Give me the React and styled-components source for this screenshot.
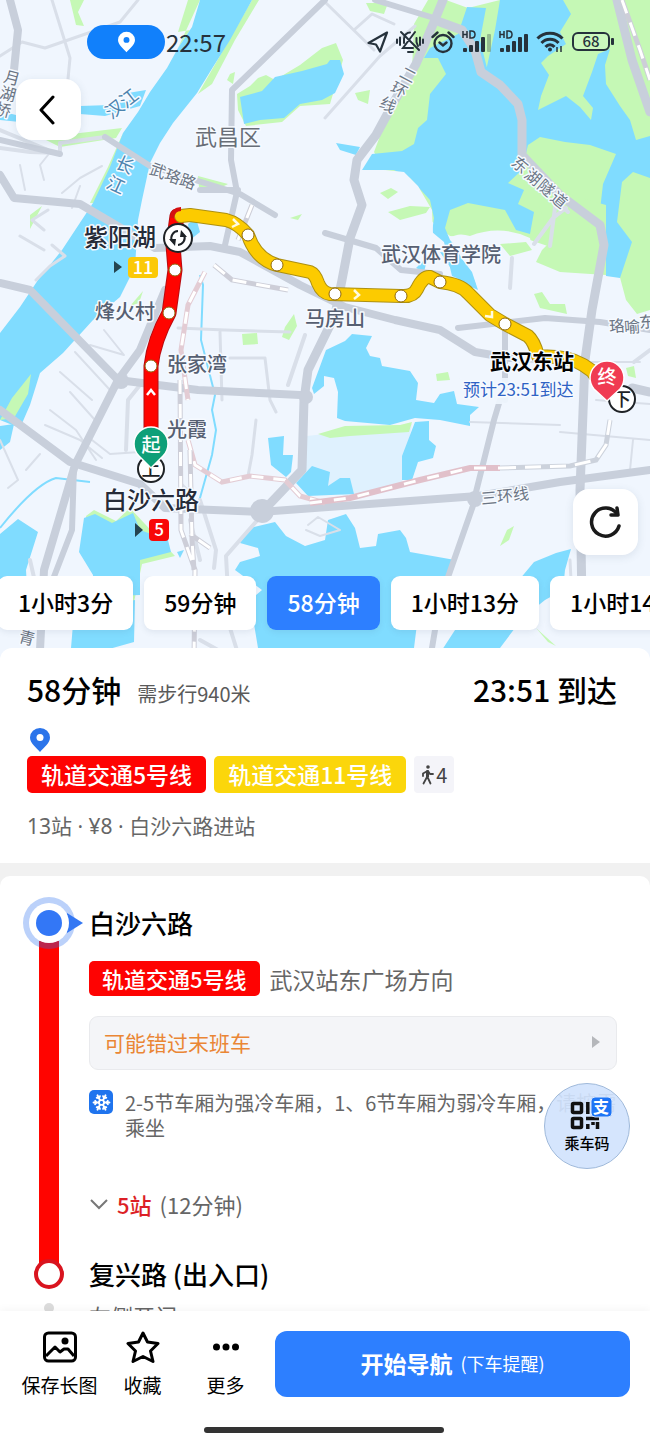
import React from "react";
import styled, { createGlobalStyle, css } from "styled-components";
import { Snowflake } from "lucide-react";

const GlobalStyle = createGlobalStyle`
  * { box-sizing: border-box; }
  body {
    margin: 0;
    background: #fff;
    font-family: "Noto Sans CJK SC", "Noto Sans", sans-serif;
    color: #000;
  }
  button { font: inherit; color: inherit; border: 0; background: none; padding: 0; cursor: pointer; }
  h1, h2, p { margin: 0; font-weight: 500; }
`;

const Screen = styled.div`
  position: relative;
  display: flex;
  flex-direction: column;
  height: 100vh;
  overflow: hidden;
`;

const Scroller = styled.main`
  flex: 1;
  min-height: 0;
  overflow-y: auto;
  scrollbar-width: none;
`;

/* ---------- map ---------- */

const MapArea = styled.section`
  display: grid;
  height: 660px;
  overflow: hidden;
  & > * { grid-area: 1 / 1; min-width: 0; min-height: 0; }
`;

const MapCanvas = styled.svg`
  display: block;
  width: 100%;
  height: 100%;
  background: #f0f6fe;
`;

const MapOverlay = styled.div`
  position: relative;
  display: flex;
  flex-direction: column;
`;

const StatusBar = styled.header`
  display: flex;
  align-items: center;
  gap: 1px;
  padding: 25px 35px 0 87px;
  height: 59px;
  color: #26323c;
`;

const LocationPill = styled.span`
  display: flex;
  align-items: center;
  justify-content: center;
  width: 78px;
  height: 34px;
  border-radius: 17px;
  background: #1180fb;
`;

const Clock = styled.time`
  font-size: 24px;
  line-height: 34px;
`;

const StatusIcons = styled.div`
  display: flex;
  align-items: center;
  gap: 7px;
  margin-left: auto;
`;

const FloatButton = styled.button`
  display: flex;
  align-items: center;
  justify-content: center;
  width: 65px;
  height: ${(p) => (p.$tall ? 66 : 61)}px;
  border-radius: 16px;
  background: #fff;
  box-shadow: 0 2px 8px rgba(60, 80, 110, 0.12);
`;

const BackRow = styled.div`
  padding: 20px 16px 0;
`;

const RefreshRow = styled.div`
  display: flex;
  justify-content: flex-end;
  margin-top: auto;
  padding: 0 12px 21px;
`;

const Chips = styled.div`
  display: flex;
  gap: 11px;
  height: 84px;
  margin-left: -2px;
  overflow: hidden;
`;

const Chip = styled.button`
  flex: none;
  height: 54px;
  padding: 0 20px 2px;
  border-radius: 9px;
  font-size: 23px;
  font-weight: 500;
  background: ${(p) => (p.$active ? "#2d7fff" : "#fff")};
  color: ${(p) => (p.$active ? "#fff" : "#000")};
  box-shadow: 0 2px 6px rgba(60, 80, 110, 0.1);
`;

/* ---------- summary ---------- */

const Summary = styled.section`
  position: relative;
  margin-top: -12px;
  padding: 20px 33px 22px 27px;
  border-radius: 12px 12px 0 0;
  background: #fff;
`;

const TitleRow = styled.div`
  display: flex;
  align-items: baseline;
  height: 44px;
  line-height: 42px;
`;

const Duration = styled.h1`
  font-size: 30px;
  font-weight: 500;
`;

const WalkNote = styled.span`
  margin-left: 16px;
  font-size: 20px;
  line-height: 24px;
  color: #5a5a5a;
`;

const Arrival = styled(Duration).attrs({ as: "p" })`
  margin-left: auto;
`;

const PinLine = styled.div`
  margin: 16px 0 4px 3px;
  height: 24px;
  svg { display: block; }
`;

const LineRow = styled.div`
  display: flex;
  align-items: center;
  gap: 8px;
`;

const LineBadge = styled.span`
  flex: none;
  height: ${(p) => (p.$small ? 35 : 37)}px;
  line-height: ${(p) => (p.$small ? 34 : 36)}px;
  padding: 0 ${(p) => (p.$small ? 13 : 14)}px;
  border-radius: 5px;
  font-size: ${(p) => (p.$small ? 22 : 23)}px;
  font-weight: 500;
  color: #fff;
  background: ${(p) => p.$color};
`;

const WalkBadge = styled.span`
  display: flex;
  align-items: center;
  justify-content: center;
  gap: 2px;
  width: 40px;
  height: 37px;
  border-radius: 4px;
  background: #f4f4f9;
  font-size: 20px;
  color: #444;
`;

const Meta = styled.p`
  margin-top: 18px;
  font-family: "Noto Sans", "Noto Sans CJK SC", sans-serif;
  font-size: 21px;
  font-weight: 400;
  line-height: 30px;
  color: #666;
`;

const Divider = styled.div`
  height: 25px;
  background: #f1f1f1;
`;

/* ---------- itinerary ---------- */

const Itinerary = styled.section`
  position: relative;
  margin-top: -12px;
  padding: 21px 33px 0 19px;
  border-radius: 10px 10px 0 0;
  background: #fff;
`;

const Leg = styled.div`
  display: grid;
  grid-template-columns: 60px 1fr;
  gap: 10px;
`;

const Rail = styled.div`
  display: flex;
  flex-direction: column;
  align-items: center;
`;

const StartNode = styled.svg`
  flex: none;
  z-index: 1;
  overflow: visible;
`;

const RailLine = styled.div`
  flex: 1;
  width: 20px;
  margin: -8px 0 -4px;
  background: #ff0400;
`;

const EndNode = styled.span`
  z-index: 1;
  width: 30px;
  height: 30px;
  border: 4px solid #d9141f;
  border-radius: 50%;
  background: #fff;
`;

const RailDot = styled.span`
  width: 10px;
  height: 10px;
  margin-top: 14px;
  border-radius: 50%;
  background: #dcdcdc;
`;

const LegBody = styled.div`
  min-width: 0;
  ${(p) => p.$first && css`padding: 11px 0 40px;`}
`;

const Station = styled.h2`
  font-size: 26px;
  line-height: 30px;
`;

const DirectionRow = styled.div`
  display: flex;
  align-items: center;
  gap: 10px;
  margin: 23px 0 20px;
`;

const Direction = styled.span`
  font-size: 23px;
  line-height: 34px;
  color: #666;
`;

const Warning = styled.button`
  display: flex;
  align-items: center;
  justify-content: space-between;
  width: 100%;
  height: 54px;
  padding: 0 16px 2px 14px;
  border: 1px solid #e9eaed;
  border-radius: 9px;
  background: #f4f5f8;
  font-size: 21px;
  color: #ea8635;
`;

const Note = styled.div`
  display: flex;
  gap: 12px;
  margin: 20px -8px 49px 0;
`;

const SnowBadge = styled.span`
  flex: none;
  display: flex;
  align-items: center;
  justify-content: center;
  width: 24px;
  height: 24px;
  border-radius: 5px;
  background: #1f74ee;
  color: #fff;
`;

const NoteText = styled.p`
  font-size: 20px;
  font-weight: 400;
  line-height: 25px;
  color: #666;
`;

const Expand = styled.button`
  display: flex;
  align-items: center;
  gap: 8px;
  font-size: 22px;
  line-height: 30px;
  color: #666;
  strong { font-weight: 500; color: #dc1f26; }
`;

const DoorSide = styled.p`
  margin-top: 13px;
  font-size: 22px;
  font-weight: 400;
  line-height: 26px;
  color: #666;
`;

/* ---------- floating code and bottom bar ---------- */

const CodeButton = styled.button`
  position: absolute;
  right: 20px;
  bottom: 275px;
  z-index: 2;
  display: flex;
  flex-direction: column;
  align-items: center;
  justify-content: center;
  width: 86px;
  height: 86px;
  border: 1px solid #9fb9da;
  border-radius: 50%;
  background: rgba(209, 227, 253, 0.92);
  font-size: 15px;
  font-weight: 500;
  line-height: 24px;
`;

const BottomBar = styled.footer`
  z-index: 1;
  padding: 20px 20px 11px 18px;
  background: #fff;
  box-shadow: 0 -2px 8px rgba(0, 0, 0, 0.04);
`;

const Actions = styled.div`
  display: flex;
  height: 66px;
`;

const Tool = styled.button`
  display: flex;
  flex-direction: column;
  align-items: center;
  justify-content: space-between;
  width: 83px;
  padding-bottom: 1px;
  font-size: 19px;
  line-height: 22px;
`;

const Navigate = styled.button`
  flex: 1;
  display: flex;
  align-items: center;
  justify-content: center;
  gap: 8px;
  margin-left: 8px;
  padding-bottom: 2px;
  border-radius: 12px;
  background: #2d7fff;
  color: #fff;
  font-size: 23px;
  font-weight: 700;
  small { font-size: 18px; font-weight: 400; }
`;

const HomeIndicator = styled.div`
  width: 240px;
  height: 6px;
  margin: 30px auto 0;
  border-radius: 3px;
  background: #333;
`;

/* ---------- map drawing ---------- */

const Water = styled.path`fill: #80dcff;`;
const Green = styled.path`fill: #c5f8b5;`;
const Land = styled.path`fill: #f0f6fe;`;
const Road = styled.path`
  fill: none;
  stroke: ${(p) => (p.$minor ? "#d9dfe9" : "#c8cfdb")};
  stroke-width: ${(p) => p.$w};
  stroke-linejoin: round;
  stroke-linecap: round;
`;
const Rails = styled.path`
  fill: none;
  stroke: ${(p) => p.$color};
  stroke-width: ${(p) => p.$w};
  stroke-dasharray: ${(p) => p.$dash || "none"};
`;
const Route = styled.path`
  fill: none;
  stroke: ${(p) => p.$color};
  stroke-width: ${(p) => p.$w};
  stroke-linejoin: round;
  stroke-linecap: round;
`;
const MapText = styled.text`
  font-size: ${(p) => p.$size || 20}px;
  font-weight: ${(p) => p.$weight || 500};
  fill: ${(p) => p.$color || "#566072"};
  stroke: ${(p) => (p.$plain ? "none" : "#f6faff")};
  stroke-width: 3px;
  stroke-linejoin: round;
  paint-order: stroke;
  text-anchor: ${(p) => p.$anchor || "start"};
`;

/* Street names set one character at a time along the street. */
function StreetName({ chars, angle, size = 16, color = "#6b7584" }) {
  return chars.map(([c, x, y]) => (
    <MapText key={c} $size={size} $weight={400} $color={color} $anchor="middle"
      transform={`translate(${x} ${y}) rotate(${angle})`} y={size * 0.36}>{c}</MapText>
  ));
}

const STOPS = [
  [248, 235], [277, 265], [335, 294], [401, 296], [440, 282], [505, 324],
  [175, 270], [169, 313], [151, 366],
];

const YELLOW = "M181 216 L190 215 L226 220 Q238 223 248 235 Q256 259 277 265 L310 272 Q315 274 318 283 Q322 293 330 294 L401 296 Q413 297 417 289 Q423 276 430 277 L440 282 Q460 284 468 293 L490 315 L505 324 L528 336 Q534 341 538 356 L556 357 Q576 358 592 371 L607 392";
const RED = "M151 450 L151 366 Q154 340 169 313 L175 270 L173 245 L177 216";

function MetroMap() {
  return (
    <MapCanvas viewBox="0 0 650 660" preserveAspectRatio="xMidYMin slice" role="img" aria-label="路线地图">
      {/* river with its green banks */}
      <Green d="M188 0 L200 0 L178 48 L190 30 L178 32Z M252 0 L259 0 L235 40 L212 84 L198 94Z M123 133 L108 167 L90 203 L97 203 L114 167Z" />
      <Water d="M200 0 L192 27 L178 48 L167 68 L150 92 L138 112 L123 133 L110 167 L93 203 L62 250 L38 280 L20 307 L0 333 L0 420 L20 428 L30 405 L40 373 L63 353 L93 320 L120 297 L135 267 L138 220 L142 200 L150 163 L160 143 L173 123 L197 93 L213 67 L230 40 L252 0Z" />
      <Water d="M146 90 L128 93 L134 99 L110 105 L80 106 L80 114 L105 116 L140 106Z M0 111 L20 116 L20 122 L0 120Z" />
      <Green d="M0 420 L12 398 L31 374 L28 394 L14 418Z M70 0 L84 0 L78 12 L84 26 L76 25Z M40 137 L80 133 L122 128 L116 138 L60 147Z M230 74 L235 72 L233 84 L227 80Z M198 176 L228 184 L214 191 L199 187Z M30 215 L42 206 L30 229Z" />
      {/* west lakes */}
      <Green d="M237 94 L250 86 L258 78 L266 75 L275 80 L300 65 L322 48 L336 43 L343 60 L330 104 L300 106 L282 122 L246 126 L238 110Z" />
      <Water d="M240 97 L262 91 L275 77 L302 71 L327 64 L330 60 L340 60 L344 74 L335 93 L322 100 L300 104 L284 118 L260 120 L244 124Z" />
      <Green d="M366 3 L388 3 L384 14 L370 11Z M355 93 L370 90 L368 104 L358 100Z M290 218 L302 214 L298 220Z M242 334 L257 333 L258 344 L243 345Z M285 327 L294 314 L297 326 L289 340 L282 337Z M130 306 L143 291 L139 303Z" />
      {/* East Lake */}
      <Green d="M428 0 L446 0 L468 8 L500 0 L565 0 L650 0 L650 310 L637 314 L626 300 L618 270 L530 240 L500 240 L450 236 L430 220 L385 172 L374 152 L386 120 L412 70 L414 24Z" />
      <Water d="M500 0 L563 0 L571 14 L560 32 L566 44 L548 56 L541 63 L549 75 L541 96 L538 110 L566 96 L580 107 L591 120 L593 108 L583 96 L592 72 L598 54 L610 49 L605 65 L606 84 L620 106 L630 120 L636 140 L650 136 L650 178 L633 172 L622 182 L617 222 L632 242 L620 278 L606 276 L600 210 L603 184 L616 154 L590 145 L565 142 L540 137 L528 145 L522 170 L508 183 L524 190 L518 204 L534 212 L530 234 L516 230 L505 210 L468 203 L450 210 L445 228 L450 240 L470 262 L476 286 L452 276 L444 242 L432 232 L434 218 L430 200 L410 178 L394 170 L362 170 L372 154 L402 151 L414 144 L418 128 L427 120 L430 94 L446 74 L438 58 L424 58 L430 48 L458 34 L467 7 L486 8 L480 40 L488 72 L484 80 L495 30Z" />
      <Land d="M356 174 L385 170 L404 172 L418 186 L432 210 L433 234 L418 266 L408 272 L390 272 L350 220Z M450 238 Q458 232 470 236 Q500 224 530 238 L535 262 L565 277 L606 276 L616 300 L630 318 L560 320 L480 290Z" />
      <Green d="M380 193 L391 188 L398 192 L388 199Z M388 212 L410 206 L430 207 L426 213 L400 220Z M538 204 L570 195 L606 205 L606 275 L560 272 L536 262 L542 250 L552 240Z M500 244 L526 242 L532 250 L510 256Z M534 294 L542 292 L550 304 L565 304 L567 314 L540 308Z" />
      <Water d="M336 143 L360 147 L356 155 L340 150Z M416 268 L428 256 L424 272Z M188 224 L196 218 L200 232 L190 240Z M440 252 L458 254 L472 272 L478 290 L460 282Z" />
      {/* southern lakes */}
      <path fill="#dff1fe" d="M307 436 L412 424 L402 482 L350 498 L302 480Z" />
      <Water d="M345 341 L352 334 L372 336 L366 348 L370 356 L380 358 L382 366 L410 371 L418 383 L416 400 L434 403 L440 394 L454 391 L457 404 L479 407 L470 415 L470 426 L440 420 L415 418 L390 425 L345 421 L337 418 L338 392 L334 378 L324 376 L324 386 L314 394 L312 388 L326 350Z" />
      <Green d="M318 434 L345 426 L400 425 L412 422 L409 432 L350 436 L330 438Z" />
      <Water d="M415 422 L429 421 L429 440 L436 446 L433 458 L418 462 L412 480 L402 480 L402 456Z M268 438 L284 436 L283 455 L293 455 L291 472 L286 477 L271 465Z M296 483 L312 466 L330 472 L328 486 L340 478 L350 478 L354 494 L308 496Z" />
      <Water d="M240 543 L250 528 L275 522 L286 536 L305 546 L325 540 L328 520 L346 514 L355 528 L360 548 L376 546 L378 534 L400 530 L406 538 L410 552 L455 560 L448 576 L420 600 L414 648 L260 660 L250 600 L262 590 L235 570 L240 562 L260 556 L258 548Z M455 630 L515 628 L500 648 L442 650Z" />
      <Green d="M86 516 L94 510 L116 521 L130 508 L175 556 L142 564 L134 602 L90 560Z" />
      <Water d="M84 518 L95 514 L112 523 L133 513 L140 530 L168 540 L171 552 L140 560 L140 595 L112 596 L92 600 L93 575 L79 552Z M0 534 L18 519 L38 532 L26 570 L28 605 L0 610Z M74 612 L135 600 L134 642 L70 660Z M0 426 L14 424 L10 442 L0 450Z M177 552 L184 550 L180 558Z" />
      <Water d="M519 580 L534 562 L556 553 L571 549 L565 570 L563 590 L545 600 L520 620Z" />
      <Green d="M436 374 L448 372 L450 380 L437 381Z M507 530 L514 526 L509 540 L500 546Z M626 368 L634 366 L636 378 L628 376Z M536 628 L556 646 L548 642Z" />
      <path d="M0 528 Q35 484 56 478 L90 482 M200 275 L203 285 L201 340 L215 395 L212 410 L216 430 L212 455 L205 480 L198 505" fill="none" stroke="#80dcff" strokeWidth="2" />

      {/* minor streets */}
      <Road $minor $w={2} d="M75 352 L110 390 M90 345 L124 355 L104 330 M60 372 L92 400 M70 392 L95 420 M50 410 L76 430 L96 460 M45 425 L80 440 L102 458 M0 440 L18 480 L8 488 M26 470 L40 454 M92 440 L110 454 L140 452 M180 482 L188 490 M48 155 L40 165 L44 180 M20 165 L25 190 M62 193 L80 178 L102 166 M72 208 L80 186 M308 525 L318 517 L340 530 L320 536 L306 530 M560 432 L650 440 M633 440 L630 470 M470 422 L560 425 M520 362 L640 362 M596 400 L650 404" />
      <Road $minor $w={3} d="M52 0 L70 58 L68 79 M0 56 L22 42 L45 48 L120 22 L138 0 M325 118 L380 56 L415 26 M325 2 L374 50 M354 30 L372 14 L394 24 M52 245 L65 256 L50 266 L36 280 M20 236 L44 250 M44 230 L32 220 L48 210 M178 328 L225 330 L290 332 M220 332 L222 400 M230 358 L265 358 L270 400 L276 412 M256 420 L252 455 L248 476 M570 560 L571 580 M506 330 L506 354" />
      <Road $minor $w={4} d="M0 130 L48 150 M0 148 L30 152 L60 153 M60 153 L60 143 L105 137 M550 246 L556 200 L568 212 M510 288 L512 258 M534 244 L553 218 L566 208 M634 362 L650 350 M140 385 L128 400 L126 450 M305 335 L288 385 M236 660 L200 640 M200 500 L216 550 L214 568 M190 520 L200 560 M38 595 L30 560 M240 660 L230 628 L226 556 L240 540 L262 515" />
      {/* main roads */}
      <Road $w={6} d="M325 0 L232 90 L231 160 L237 192 L225 245 M0 140 L60 154 M105 137 L150 166 L240 194 L275 215 M200 190 L238 190 M434 18 L375 0 M325 233 L376 248 L401 270 L440 274 M458 328 L545 318 L600 322 L650 330 M505 400 L505 328 M475 496 L494 420 L500 400 M475 500 L440 600 L430 660 M45 600 L72 530 L74 466" />
      <Road $w={8} d="M10 0 L18 30 L14 70 M0 175 L14 198 L80 204 L155 248 L210 246 L240 252 L300 285 L345 307 L395 320 L440 330 L475 352 L510 358 M0 283 L30 290 L118 380 L198 390 L300 395 M118 380 L75 465 L44 570 L40 650 M118 380 L140 350 L165 290 M0 410 L70 462 L140 484 L165 508 L260 512 L478 496 L560 482 L650 470" />
      <Road $w={9} d="M443 0 L434 22 L416 64 L395 100 L376 135 L357 160 L354 180 L362 205 L350 238 L342 280 L335 315 L308 370 L304 400 L302 470 L262 512 M440 22 L462 30 L475 50 L481 72 L500 85 L518 104 L522 120 L522 155 L560 195 L600 225 L604 245 L592 310 L585 360 L580 490 L582 600 M617 0 L632 60 L650 112 M632 388 L650 392" />
      <circle cx="262" cy="511" r="12" fill="#c8cfdb" />
      <circle cx="306" cy="397" r="7" fill="#c8cfdb" />
      <circle cx="121" cy="381" r="8" fill="#c8cfdb" />
      <circle cx="475" cy="499" r="8" fill="#c8cfdb" />

      {/* railways */}
      <Rails $color="#e3ccd4" $w={5} d="M205 272 L188 305 L181 350 L188 400 M188 440 L195 465 L222 482 L250 476 L285 480 L300 496 L325 503" />
      <Rails $color="#fff" $w={3} $dash="12 10" d="M205 272 L188 305 L181 350 L188 400 M188 440 L195 465 L222 482 L250 476 L285 480 L300 496 L325 503" />
      <Rails $color="#cdced8" $w={5} d="M180 380 L181 530 L195 570 L194 660 M190 450 L192 540 L194 570 M210 548 L190 534 M214 265 L232 280 L288 290 M622 0 L640 50 L650 80 M252 205 L238 240" />
      <Rails $color="#fff" $w={3} $dash="14 10" d="M180 380 L181 530 L195 570 L194 660 M190 450 L192 540 L194 570 M210 548 L190 534 M214 265 L232 280 L288 290 M622 0 L640 50 L650 80 M252 205 L238 240" />
      <Rails $color="#e1c0ca" $w={6} d="M310 503 L350 498 L420 480 L470 468 L500 468" />
      <Rails $color="#fff" $w={3} $dash="12 12" d="M310 503 L350 498 L420 480 L470 468 L500 468" />
      <Rails $color="#ccd2dc" $w={5} d="M500 468 L570 466 L596 460 L606 445 L610 420" />
      <Rails $color="#fff" $w={3} $dash="16 9" d="M500 468 L570 466 L596 460 L606 445 L610 420" />

      {/* area and street names */}
      <MapText x="228" y="145" $size={22} $weight={400} $color="#686e77" $anchor="middle">武昌区</MapText>
      <MapText $size={18} $weight={400} $color="#4c83ae" $anchor="middle" transform="translate(122 104) rotate(-38)" y="6">汉江</MapText>
      <StreetName chars={[["长", 125, 165], ["江", 116, 185]]} angle={25} size={18} color="#4c83ae" />
      <MapText $size={16} $weight={400} $color="#6b7584" $anchor="middle" transform="translate(173 176) rotate(20)" y="6">武珞路</MapText>
      <StreetName chars={[["月", 12, 78], ["湖", 8, 94], ["桥", 3, 110]]} angle={15} />
      <StreetName chars={[["二", 408, 75], ["环", 399, 90], ["线", 388, 105]]} angle={28} />
      <StreetName chars={[["东", 520, 165], ["湖", 533, 177], ["隧", 546, 188], ["道", 559, 200]]} angle={40} />
      <StreetName chars={[["珞", 617, 326], ["喻", 632, 327], ["东", 647, 322]]} angle={-4} />
      <StreetName chars={[["三", 489, 498], ["环", 505, 496], ["线", 521, 494]]} angle={-5} />
      <StreetName chars={[["青", 27, 638]]} angle={15} />

      {/* route */}
      <Route d={RED} $color="#b80c10" $w={15} />
      <Route d={RED} $color="#ff0400" $w={13} />
      <Route d={YELLOW} $color="#ad9010" $w={14} />
      <Route d={YELLOW} $color="#fccb00" $w={12} />
      <path d="M172 218 Q173 209 181 209" fill="none" stroke="#d50f10" strokeWidth="4" />
      {STOPS.map(([x, y]) => (
        <circle key={`${x}-${y}`} cx={x} cy={y} r="6" fill="#fff" stroke="#8f6a10" strokeWidth="1" />
      ))}
      <path d="M147 395 L151 390 L155 395" fill="none" stroke="#fff" strokeWidth="2.5" />
      <g fill="none" stroke="#fffbe0" strokeWidth="2.5">
        <path d="M233 219 L238 224 L232 227" />
        <path d="M354 290 L359 295 L354 299" />
        <path d="M492 311 L492 317 L485 316" />
      </g>

      {/* stop names */}
      <MapText x="95" y="319">烽火村</MapText>
      <MapText x="167" y="372">张家湾</MapText>
      <MapText x="167" y="437">光霞</MapText>
      <MapText x="305" y="326">马房山</MapText>
      <MapText x="381" y="262">武汉体育学院</MapText>
      <MapText x="84" y="246" $size={24} $color="#252b38">紫阳湖</MapText>
      <MapText x="103" y="509" $size={24} $color="#252b38">白沙六路</MapText>
      <rect x="458" y="378" width="116" height="26" rx="4" fill="#f0f6fe" opacity="0.9" />
      <MapText x="490" y="369" $size={21} $weight={700} $color="#000">武汉东站</MapText>
      <MapText x="463" y="396" $size={17} $weight={400} $color="#2f62c4">预计23:51到达</MapText>

      <path d="M114 261 L122 267 L114 273Z M135 523 L143 530 L135 537Z" fill="#244450" />
      <rect x="128" y="257" width="30" height="21" rx="4" fill="#fbc908" />
      <MapText x="143" y="274" $size={18} $color="#fff" $plain $anchor="middle">11</MapText>
      <rect x="149" y="519" width="20" height="22" rx="4" fill="#f80808" />
      <MapText x="159" y="536" $size={17} $color="#fff" $plain $anchor="middle">5</MapText>

      {/* transfer, boarding and alighting markers */}
      <circle cx="178" cy="238" r="14" fill="#fff" stroke="#1e2226" strokeWidth="2" />
      <g fill="none" stroke="#1e2226" strokeWidth="2">
        <path d="M178 231 A7 7 0 0 0 172 241" />
        <path d="M178 245 A7 7 0 0 0 184 235" />
      </g>
      <path d="M169 239 L176 239 L175 246Z M187 237 L180 237 L181 230Z" fill="#1e2226" />
      <circle cx="151" cy="469" r="13" fill="#fff" stroke="#1e2226" strokeWidth="2" />
      <MapText x="151" y="476" $size={19} $color="#1e2226" $plain $anchor="middle">上</MapText>
      <circle cx="622" cy="399" r="13" fill="#fff" stroke="#1e2226" strokeWidth="2" />
      <MapText x="622" y="406" $size={18} $color="#1e2226" $plain $anchor="middle">下</MapText>
      <path d="M151 468 L139 456 A17 17 0 1 1 163 456Z" fill="#0e9f78" stroke="#fff" strokeWidth="1.5" />
      <MapText x="151" y="452" $size={19} $color="#fff" $plain $anchor="middle">起</MapText>
      <path d="M607 401 L594 389 A17 17 0 1 1 620 389Z" fill="#f03b52" stroke="#fff" strokeWidth="1.5" />
      <MapText x="607" y="384" $size={19} $color="#fff" $plain $anchor="middle">终</MapText>
    </MapCanvas>
  );
}

/* ---------- icons ---------- */

function PinIcon({ width, height, color, hole }) {
  return (
    <svg width={width} height={height} viewBox="0 0 20 24" aria-hidden="true">
      <path d="M10 24 C7 20 0 15.500 0 9.500 A10 9.500 0 0 1 20 9.500 C20 15.500 13 20 10 24Z" fill={color} />
      <circle cx="10" cy="9.500" r="3.500" fill={hole} />
    </svg>
  );
}

function SignalIcon({ weak }) {
  return (
    <svg width="30" height="24" viewBox="0 0 30 24" fill="currentColor" aria-hidden="true">
      <path d="M1 1V8 M5 1V8 M1 4.500H5 M8 1V8H9.500Q13 8 13 4.500T9.500 1Z" fill="none" stroke="currentColor" strokeWidth="1.500" />
      <rect x="1" y="18" width="4" height="4" rx="1" />
      <rect x="7" y="15" width="4" height="7" rx="1" />
      <rect x="13" y="11" width="4" height="11" rx="1" />
      <rect x="19" y="7" width="4" height="15" rx="1" />
      <rect x="25" y="4" width="4" height="18" rx="1" opacity={weak ? 0.3 : 1} />
    </svg>
  );
}

function StatusGlyphs() {
  return (
    <StatusIcons>
      <svg width="22" height="22" viewBox="0 0 22 22" fill="none" stroke="currentColor" strokeWidth="2.200" strokeLinejoin="round" aria-hidden="true">
        <path d="M20 1.500 L1.500 12 L9 13.500 L13 20.500Z" />
      </svg>
      <svg width="28" height="24" viewBox="0 0 28 24" fill="none" stroke="currentColor" strokeWidth="2" strokeLinecap="round" aria-hidden="true">
        <path d="M5 2 L23 20 M19 2 L7 18 H17 M8 13 V9 C8 5 11 2.500 14 2.500 M20.500 8 V12 L22 16 M12 22 H17 M1 9.500 V13 M4 7.500 V15 M24 7.500 V15 M27 9.500 V13" />
      </svg>
      <svg width="24" height="23" viewBox="0 0 24 23" fill="none" stroke="currentColor" strokeWidth="2.400" strokeLinecap="round" aria-hidden="true">
        <circle cx="12" cy="12.500" r="8.500" />
        <path d="M8.500 11.500 L12 14.500 L15.500 11.500 M1.500 6 L6.500 1.500 M22.500 6 L17.500 1.500" />
      </svg>
      <SignalIcon weak />
      <SignalIcon />
      <svg width="29" height="22" viewBox="0 0 29 22" fill="none" stroke="currentColor" strokeWidth="3" aria-hidden="true">
        <path d="M1.500 7.500 C8 0.500 20 0.500 26.500 7.500 M5.500 12 C10 7 18 7 22.500 12 M9.500 16 C12 13 16 13 18.500 16" />
        <circle cx="14" cy="18.500" r="2" fill="currentColor" stroke="none" />
        <path d="M21 16 V21 M25 15 V21" strokeWidth="1.500" />
      </svg>
      <svg width="43" height="20" viewBox="0 0 43 20" aria-hidden="true">
        <rect x="1" y="1" width="36" height="17" rx="5" fill="#ffffff22" stroke="currentColor" strokeWidth="2" />
        <rect x="39" y="6" width="3" height="7" rx="1" fill="currentColor" />
        <text x="19" y="15" fontSize="15" fontWeight="500" textAnchor="middle" fill="currentColor">68</text>
      </svg>
    </StatusIcons>
  );
}

function WalkIcon() {
  return (
    <svg width="13" height="20" viewBox="0 0 13 20" fill="none" stroke="#444" strokeWidth="1.800" strokeLinecap="round" strokeLinejoin="round" aria-hidden="true">
      <circle cx="7" cy="2" r="1.800" fill="#444" stroke="none" />
      <path d="M6.500 6 V12 L9.500 18.500 M6 12 L2.500 18.500 M6.500 6 L2 8.500 V11 M7 6 L9 9 H12" />
      <path d="M5 5.500 H8 V12 H5Z" fill="#444" stroke="none" />
    </svg>
  );
}

function CodeIcon() {
  return (
    <svg width="50" height="34" viewBox="-4 0 50 34" aria-hidden="true">
      <g fill="none" stroke="#111" strokeWidth="3.500">
        <rect x="6.500" y="6.500" width="9" height="9" rx="1" />
        <rect x="6.500" y="21.500" width="9" height="9" rx="1" />
        <path d="M21.800 5 V17 M20 21.500 H33 M21.800 27 V32 M27 25 V28 M31.500 25 V32" />
      </g>
      <rect x="25" y="0" width="21" height="20" rx="4" fill="#1d74f5" stroke="#d6e6fd" strokeWidth="1" />
      <text x="35" y="16" fontSize="16" fontWeight="700" fill="#fff" textAnchor="middle">支</text>
    </svg>
  );
}

const DURATIONS = ["1小时3分", "59分钟", "58分钟", "1小时13分", "1小时14分"];

export default function App() {
  return (
    <>
      <GlobalStyle />
      <Screen>
        <Scroller>
          <MapArea>
            <MetroMap />
            <MapOverlay>
              <StatusBar>
                <LocationPill><PinIcon width={17} height={22} color="#fff" hole="#1180fb" /></LocationPill>
                <Clock>22:57</Clock>
                <StatusGlyphs />
              </StatusBar>
              <BackRow>
                <FloatButton aria-label="返回">
                  <svg width="20" height="30" viewBox="0 0 20 30" fill="none" stroke="#000" strokeWidth="3" strokeLinecap="round" strokeLinejoin="round">
                    <path d="M14 2 L2 15 L14 28" />
                  </svg>
                </FloatButton>
              </BackRow>
              <RefreshRow>
                <FloatButton $tall aria-label="刷新">
                  <svg width="34" height="34" viewBox="0 0 34 34" fill="none" stroke="#1a1a1a" strokeWidth="3.500" strokeLinecap="round" strokeLinejoin="round">
                    <path d="M30 21 A14 14 0 1 1 28 9" />
                    <path d="M28 3 L29 10 L22 10" />
                  </svg>
                </FloatButton>
              </RefreshRow>
              <Chips>
                {DURATIONS.map((d) => (
                  <Chip key={d} $active={d === "58分钟"} aria-pressed={d === "58分钟"}>{d}</Chip>
                ))}
              </Chips>
            </MapOverlay>
          </MapArea>

          <Summary>
            <TitleRow>
              <Duration>58分钟</Duration>
              <WalkNote>需步行940米</WalkNote>
              <Arrival>23:51 到达</Arrival>
            </TitleRow>
            <PinLine><PinIcon width={20} height={24} color="#2b74ea" hole="#fff" /></PinLine>
            <LineRow>
              <LineBadge $color="#fe0302">轨道交通5号线</LineBadge>
              <LineBadge $color="#fbd60b">轨道交通11号线</LineBadge>
              <WalkBadge><WalkIcon />4</WalkBadge>
            </LineRow>
            <Meta>13站 · ¥8 · 白沙六路进站</Meta>
          </Summary>
          <Divider />

          <Itinerary>
            <Leg>
              <Rail>
                <StartNode width="52" height="52" viewBox="0 0 52 52" aria-hidden="true">
                  <circle cx="26" cy="26" r="26" fill="#2d6ff0" opacity="0.32" />
                  <path d="M44 16 L60 26 L44 36Z" fill="#3377f3" />
                  <circle cx="26" cy="26" r="20" fill="#fff" />
                  <circle cx="26" cy="26" r="13" fill="#3377f6" />
                </StartNode>
                <RailLine />
              </Rail>
              <LegBody $first>
                <Station>白沙六路</Station>
                <DirectionRow>
                  <LineBadge $small $color="#fe0302">轨道交通5号线</LineBadge>
                  <Direction>武汉站东广场方向</Direction>
                </DirectionRow>
                <Warning>
                  可能错过末班车
                  <svg width="8" height="14" viewBox="0 0 8 14" aria-hidden="true"><path d="M0 1 L8 7 L0 13Z" fill="#b5b7bb" /></svg>
                </Warning>
                <Note>
                  <SnowBadge><Snowflake size={19} strokeWidth={2.5} /></SnowBadge>
                  <NoteText>2-5节车厢为强冷车厢，1、6节车厢为弱冷车厢，请按需乘坐</NoteText>
                </Note>
                <Expand>
                  <svg width="20" height="12" viewBox="0 0 20 12" fill="none" stroke="#777" strokeWidth="2" aria-hidden="true"><path d="M2 2 L10 10 L18 2" /></svg>
                  <strong>5站</strong>
                  (12分钟)
                </Expand>
              </LegBody>
            </Leg>
            <Leg>
              <Rail>
                <EndNode />
                <RailDot />
              </Rail>
              <LegBody>
                <Station>复兴路 (出入口)</Station>
                <DoorSide>左侧开门</DoorSide>
              </LegBody>
            </Leg>
          </Itinerary>
        </Scroller>

        <CodeButton>
          <CodeIcon />
          乘车码
        </CodeButton>

        <BottomBar>
          <Actions>
            <Tool>
              <svg width="36" height="32" viewBox="0 0 36 32" fill="none" stroke="#000" strokeWidth="3" strokeLinejoin="round" aria-hidden="true">
                <rect x="2.500" y="2" width="31" height="28" rx="4" />
                <path d="M4 25 L13 16 L18 21 L22 18 L26 18 L32 25" />
                <circle cx="23" cy="10" r="3.500" fill="#000" stroke="none" />
              </svg>
              保存长图
            </Tool>
            <Tool>
              <svg width="34" height="32" viewBox="0 0 34 32" fill="none" stroke="#000" strokeWidth="3" strokeLinejoin="round" aria-hidden="true">
                <path d="M17 2 L21.500 11 L32 12.500 L24.500 20 L27 30.500 L17 25.500 L7 30.500 L9.500 20 L2 12.500 L12.500 11Z" />
              </svg>
              收藏
            </Tool>
            <Tool>
              <svg width="28" height="32" viewBox="0 0 28 32" aria-hidden="true">
                <circle cx="4.500" cy="16" r="3.500" />
                <circle cx="14" cy="16" r="3.500" />
                <circle cx="23.500" cy="16" r="3.500" />
              </svg>
              更多
            </Tool>
            <Navigate>开始导航<small>(下车提醒)</small></Navigate>
          </Actions>
          <HomeIndicator />
        </BottomBar>
      </Screen>
    </>
  );
}
